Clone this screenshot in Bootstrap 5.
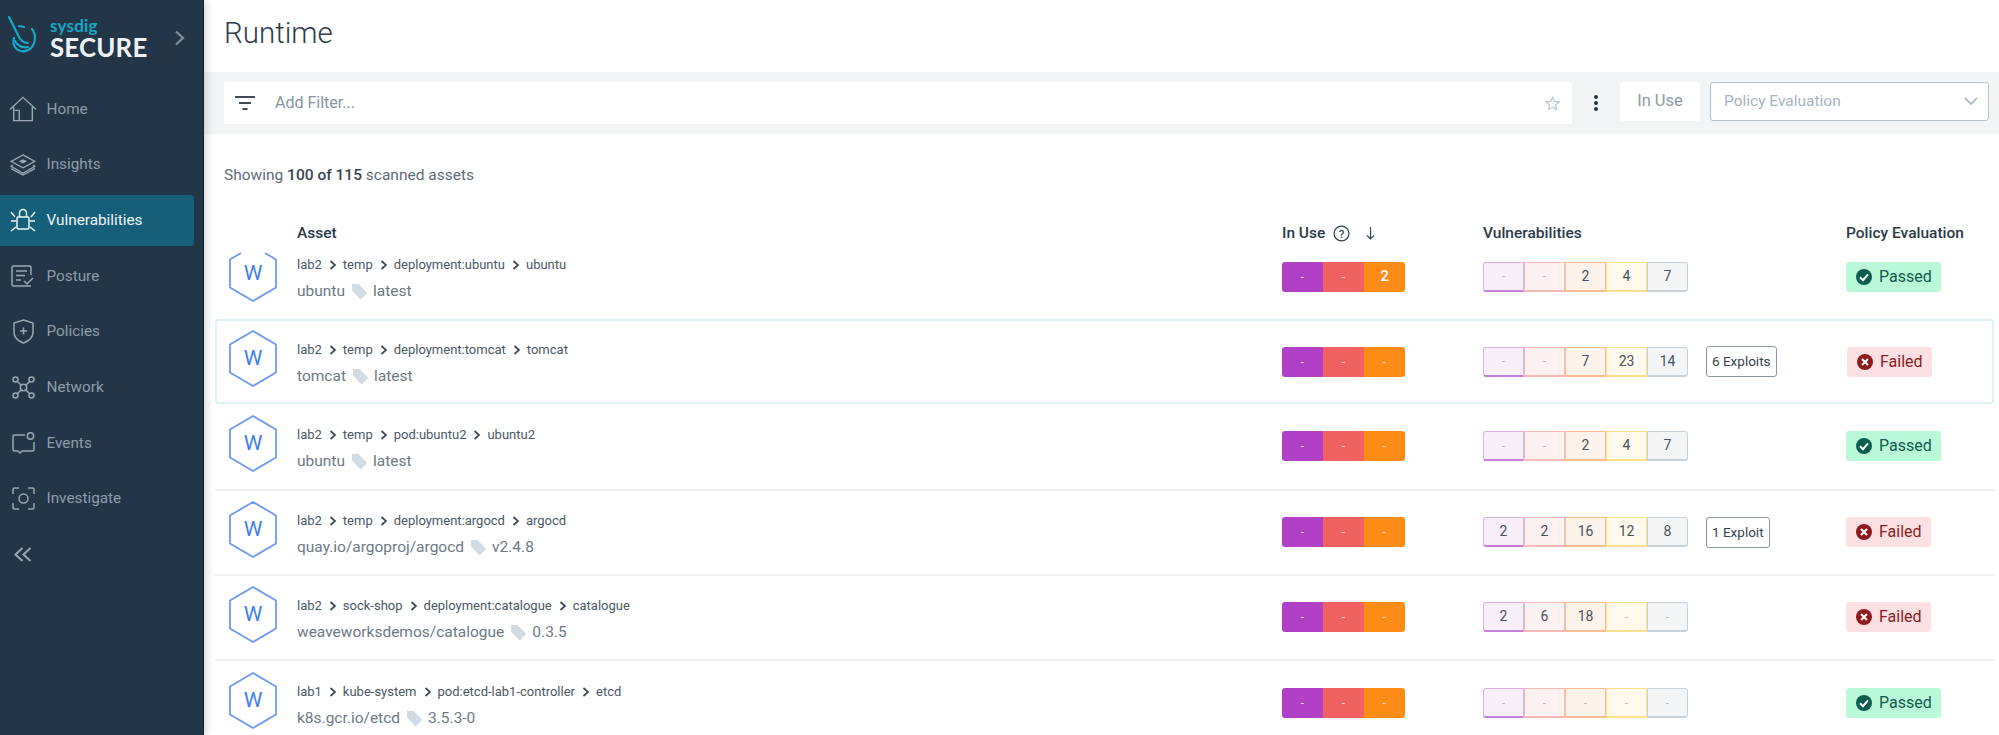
<!DOCTYPE html>
<html lang="en">
<head>
<meta charset="utf-8">
<title>Runtime</title>
<link rel="stylesheet" href="https://cdn.jsdelivr.net/npm/bootstrap@5.3.0/dist/css/bootstrap.min.css">
<style>
html,body{height:735px;overflow:hidden;background:#fff;font-family:Roboto,"Liberation Sans",sans-serif;}
.shell{height:735px;}
.side{width:204px;flex:none;background:#233648;border-right:1px solid #101f2e;box-shadow:3px 0 7px rgba(20,30,40,.16);z-index:2;}
.brand{height:83.500px;padding:15px 0 0 8px;}
.brand-text{margin-left:13px;line-height:1;}
.brand-top{color:#14a9c6;font:700 17px/17px Lato,sans-serif;margin-top:2px;letter-spacing:.2px;}
.brand-main{color:#eef2f5;font:700 25.800px/26px Lato,sans-serif;letter-spacing:.2px;}
.brand-chev{margin-left:27px;margin-top:15px;}
.menu{gap:4.700px;}
.menu-item{height:51px;width:194px;color:#8d9daa;font-size:15.300px;border-radius:0 3px 3px 0;padding:0;}
.menu-item:hover{color:#8d9daa;}
.menu-item.on{background:#156078;color:#f0f5f8;}
.menu-ic{width:46.500px;flex:none;display:flex;justify-content:center;}
.page{min-width:0;}
.head-title{height:72px;padding-left:20px;font-size:29.500px;font-weight:300;color:#2f3c49;line-height:66px;}
.fbar{height:62px;background:#f3f4f6;padding:10px 10px 0 20px;}
.finput{height:42px;width:1348px;background:#fff;border-radius:3px;padding:0 12px 0 11px;color:#8794a0;font-size:16px;}
.kebab{width:48px;height:42px;}
.chip-use{width:80px;height:39px;background:#fff;border-radius:3px;color:#8d99a5;font-size:16.500px;margin-right:10px;}
.sel-pol{width:279px;height:39px;background:#fff;border:1px solid #b7c2cb;border-radius:3px;color:#a7b3bd;font-size:15.500px;padding:0 10px 0 13px;}
.count{height:90px;padding:32px 0 0 20px;color:#5f6b77;font-size:15.500px;line-height:18px;}
.count b{font-weight:500;color:#3a4652;}
.grid-line{display:grid;grid-template-columns:82px 985px 201px 363px 1fr;margin:0 5px 0 11px;}
.thead{height:18px;color:#2b3947;font-size:15.500px;font-weight:500;line-height:18px;}
.trow{height:85px;align-items:center;border-bottom:2px solid #eff1f3;}
.trow.first{height:77px;padding-bottom:8px;border-bottom:0;}
.trow.hot{border:2px solid #dcf2f7;border-radius:4px;grid-template-columns:80px 985px 201px 364px 1fr;}
.trow.tall{height:86.500px;}
.trow.last{border-bottom:0;}
.hexbox{padding-left:14px;margin-bottom:6px;line-height:0;position:relative;}
.hot .hexbox{padding-left:12px;}
.hexw{position:absolute;left:14px;top:0;width:48px;height:57px;line-height:57px;text-align:center;color:#3f7df0;font-size:21px;}
.hot .hexw{left:12px;}
.crumb{color:#4a5763;font-size:13px;line-height:18px;margin-top:3px;}
.crumb svg{margin:0 6px 0 7px;vertical-align:-1px;}
.asset-name{color:#6d7984;font-size:15.500px;line-height:18px;margin-top:8px;}
.asset-name svg{margin:0 6px;vertical-align:-3px;}
.cellbox{width:41px;height:30px;font-size:14px;}
.used{width:123px;height:30px;border-radius:3px;overflow:hidden;color:#fff;}
.u1{background:#b040c6;}.u2{background:#f0625f;}.u3{background:#fd8c17;}
.used .cellbox{color:#f3d7d7;font-size:12px;}
.used .cellbox.lit{color:#fff;font-weight:500;font-size:14.500px;}
.vulns{width:205px;height:30px;}
.vulns .cellbox{border:1.500px solid;border-bottom-width:2px;color:#46535f;}
.vulns .cellbox.nil{color:#b2bac2;font-size:12px;}
.v1{background:#f8eff9;border-color:#dcaee6 #dcaee6 #c67ed8!important;border-radius:3px 0 0 3px;}
.v2{background:#fdf1f1;border-color:#f8b8b5!important;}
.v3{background:#fef3ea;border-color:#fcbd90!important;}
.v4{background:#fffaec;border-color:#fde08d!important;}
.v5{background:#f4f5f7;border-color:#c8d2da!important;border-radius:0 3px 3px 0;}
.exploit{height:31px;padding:0 5px;margin-left:18px;background:#fff;border:1.500px solid #8b98a3;border-radius:3px;color:#35424e;font-size:13.500px;}
.pill{height:30px;padding:0 0 0 10px;border-radius:3px;font-size:16px;gap:7px;}
.pill.ok{background:#b9f9da;color:#115a4d;width:95px;}
.pill.bad{background:#fde0e3;color:#86201f;width:85px;}
</style>
</head>
<body>
<svg width="0" height="0" class="position-absolute">
 <defs>
  <symbol id="hex" viewBox="0 0 48 57"><path d="M24 1 47 14.500V42.500L24 56 1 42.500V14.500Z" fill="none" stroke="#6c9bf2" stroke-width="1.800"/></symbol>
  <symbol id="chev" viewBox="0 0 8 10"><path d="M1.500 1 6 5 1.500 9" fill="none" stroke="#3d4a56" stroke-width="1.700"/></symbol>
  <symbol id="tag" viewBox="0 0 16 16"><path d="M1 1h6.500L15.500 9a1.200 1.200 0 0 1 0 1.700l-5 5a1.200 1.200 0 0 1-1.700 0L1 7.500Z" fill="#d3dbe2"/></symbol>
  <symbol id="okc" viewBox="0 0 16 16"><circle cx="8" cy="8" r="8" fill="#0b5d4e"/><path d="M4 8.300 7 11.200 12 5.300" fill="none" stroke="#fff" stroke-width="2"/></symbol>
  <symbol id="badc" viewBox="0 0 16 16"><circle cx="8" cy="8" r="8" fill="#8f1a1e"/><path d="M5 5l6 6M11 5l-6 6" fill="none" stroke="#fff" stroke-width="2"/></symbol>
 </defs>
</svg>
<div class="shell d-flex">
 <aside class="side d-flex flex-column">
  <div class="brand d-flex align-items-start">
   <svg width="29" height="39" viewBox="0 0 29 39" fill="none" stroke="#14a9c6" stroke-width="2.200" stroke-linecap="round"><path d="M1 2 11 22c2 4 5 6 9 6"/><path d="M11 11l5 1"/><path d="M24 14c4 5 4 14-1 19s-13 4-16-1c-2-3-2-6-1-9"/><path d="M7 26c3 5 8 7 13 6"/></svg>
   <div class="brand-text"><div class="brand-top">sysdig</div><div class="brand-main">SECURE</div></div>
   <svg class="brand-chev" width="11" height="16" viewBox="0 0 11 16"><path d="M2 1.500 9 8 2 14.500" fill="none" stroke="#7f8f9c" stroke-width="2.200"/></svg>
  </div>
  <nav class="nav flex-column menu">
   <a class="nav-link menu-item d-flex align-items-center" href="#"><span class="menu-ic"><svg width="28" height="26" viewBox="0 0 30 27" fill="none" stroke="#98a7b3" stroke-width="1.500"><path d="M1 14 15 1l14 13"/><path d="M5 11v15h20V11"/><path d="M11 26V15h-5"/></svg></span>Home</a>
   <a class="nav-link menu-item d-flex align-items-center" href="#"><span class="menu-ic"><svg width="26" height="22" viewBox="0 0 28 24" fill="none" stroke="#98a7b3" stroke-width="1.500"><path d="M14 1 27 8 14 15 1 8Z"/><path d="M3 12 1 13.500 14 21l13-7.500L25 12"/><path d="M1 16l13 7 13-7"/><path d="M11 8l3-1.500L17 8l-3 1.500Z" fill="#98a7b3"/></svg></span>Insights</a>
   <a class="nav-link menu-item on d-flex align-items-center" href="#"><span class="menu-ic"><svg width="26" height="24" viewBox="0 0 26 24" fill="none" stroke="#f0f5f8" stroke-width="1.500"><rect x="7" y="9" width="12" height="12" rx="1.500"/><path d="M9.500 9V5a3.500 3.500 0 0 1 7 0v4"/><path d="M1 4l4 5M25 4l-4 5M1 13h5M25 13h-5M1 23l5-4M25 23l-5-4"/></svg></span>Vulnerabilities</a>
   <a class="nav-link menu-item d-flex align-items-center" href="#"><span class="menu-ic"><svg width="24" height="22" viewBox="0 0 24 22" fill="none" stroke="#98a7b3" stroke-width="1.500"><path d="M20 10V2.500A1.500 1.500 0 0 0 18.500 1h-16A1.500 1.500 0 0 0 1 2.500v17A1.500 1.500 0 0 0 2.500 21H20"/><path d="M5 6h11M5 10.500h9M5 15h5"/><path d="M13 16l3 3 6-6"/></svg></span>Posture</a>
   <a class="nav-link menu-item d-flex align-items-center" href="#"><span class="menu-ic"><svg width="21" height="25" viewBox="0 0 21 25" fill="none" stroke="#98a7b3" stroke-width="1.500"><path d="M10.500 1 20 4v9c0 6-4 9-9.500 11C5 22 1 19 1 13V4Z"/><path d="M10.500 8.500v7M7 12h7"/></svg></span>Policies</a>
   <a class="nav-link menu-item d-flex align-items-center" href="#"><span class="menu-ic"><svg width="23" height="23" viewBox="0 0 23 23" fill="none" stroke="#98a7b3" stroke-width="1.500"><circle cx="3.500" cy="3.500" r="2.500"/><circle cx="19.500" cy="3.500" r="2.500"/><circle cx="3.500" cy="19.500" r="2.500"/><circle cx="19.500" cy="19.500" r="2.500"/><circle cx="11.500" cy="11.500" r="3.200"/><path d="M5.500 5.500 9 9M17.500 5.500 14 9M5.500 17.500 9 14M17.500 17.500 14 14"/></svg></span>Network</a>
   <a class="nav-link menu-item d-flex align-items-center" href="#"><span class="menu-ic"><svg width="23" height="22" viewBox="0 0 23 22" fill="none" stroke="#98a7b3" stroke-width="1.500"><path d="M13 3H2.500A1.500 1.500 0 0 0 1 4.500v13A1.500 1.500 0 0 0 2.500 19H6l2 2 2-2h10.500a1.500 1.500 0 0 0 1.500-1.500V10"/><circle cx="18.500" cy="4" r="3.200"/></svg></span>Events</a>
   <a class="nav-link menu-item d-flex align-items-center" href="#"><span class="menu-ic"><svg width="23" height="23" viewBox="0 0 23 23" fill="none" stroke="#98a7b3" stroke-width="1.500"><path d="M7 1H2.500A1.500 1.500 0 0 0 1 2.500V7M16 1h4.500A1.500 1.500 0 0 1 22 2.500V7M7 22H2.500A1.500 1.500 0 0 1 1 20.500V16M16 22h4.500a1.500 1.500 0 0 0 1.500-1.500V16"/><circle cx="11.500" cy="11.500" r="4.500"/></svg></span>Investigate</a>
   <a class="nav-link menu-item d-flex align-items-center" href="#" aria-label="Collapse"><span class="menu-ic"><svg width="18" height="15" viewBox="0 0 18 15" fill="none" stroke="#98a7b3" stroke-width="2"><path d="M8.500 1 1.500 7.500l7 6.500M16.500 1l-7 6.500 7 6.500"/></svg></span></a>
  </nav>
 </aside>

 <main class="page flex-grow-1">
  <div class="head-title">Runtime</div>
  <div class="fbar d-flex align-items-start">
   <div class="finput d-flex align-items-center">
    <svg width="20" height="14" viewBox="0 0 20 14" fill="#3e4b57"><rect width="20" height="2"/><rect x="4" y="6" width="12" height="2"/><rect x="7.500" y="12" width="5" height="2"/></svg>
    <span class="ms-3 ps-1 flex-grow-1">Add Filter...</span>
    <svg width="15" height="15" viewBox="0 0 15 15"><path d="M7.500 1.200 9.400 5.400l4.500.5-3.400 3 1 4.500-4-2.300-4 2.300 1-4.500-3.400-3 4.500-.5Z" fill="none" stroke="#b5c0c9" stroke-width="1.100"/></svg>
   </div>
   <div class="kebab d-flex justify-content-center align-items-center"><svg width="4" height="16" viewBox="0 0 4 16" fill="#28353f"><circle cx="2" cy="2" r="2"/><circle cx="2" cy="8" r="2"/><circle cx="2" cy="14" r="2"/></svg></div>
   <div class="chip-use d-flex align-items-center justify-content-center">In Use</div>
   <div class="sel-pol d-flex align-items-center justify-content-between"><span>Policy Evaluation</span><svg width="14" height="9" viewBox="0 0 14 9"><path d="M1 1l6 6 6-6" fill="none" stroke="#a7b3bd" stroke-width="1.700"/></svg></div>
  </div>
  <div class="count">Showing <b>100 of 115</b> scanned assets</div>

  <div class="grid-line thead">
   <div></div><div>Asset</div>
   <div class="d-flex align-items-center">In Use
    <svg class="ms-2" width="17" height="17" viewBox="0 0 16 16"><circle cx="8" cy="8" r="7" fill="none" stroke="#3a4753" stroke-width="1.200"/><text x="8" y="12" text-anchor="middle" font-size="11" fill="#3a4753">?</text></svg>
    <svg class="ms-3" width="9" height="13" viewBox="0 0 9 13"><path d="M4.500 0v12M1 8.500l3.500 3.500L8 8.500" fill="none" stroke="#3a4753" stroke-width="1.200"/></svg>
   </div>
   <div>Vulnerabilities</div><div>Policy Evaluation</div>
  </div>

  <div class="grid-line trow first">
   <div class="hexbox"><svg width="48" height="57" viewBox="0 0 48 57"><path d="M12 8 1 14.500V42.500L24 56 47 42.500V14.500L36 8" fill="none" stroke="#6c9bf2" stroke-width="1.800"/></svg><span class="hexw">W</span></div>
   <div><div class="crumb">lab2<svg width="8" height="10"><use href="#chev"/></svg>temp<svg width="8" height="10"><use href="#chev"/></svg>deployment:ubuntu<svg width="8" height="10"><use href="#chev"/></svg>ubuntu</div><div class="asset-name">ubuntu<svg width="16" height="16"><use href="#tag"/></svg>latest</div></div>
   <div class="used d-flex"><div class="cellbox u1 d-flex align-items-center justify-content-center">-</div><div class="cellbox u2 d-flex align-items-center justify-content-center">-</div><div class="cellbox u3 lit d-flex align-items-center justify-content-center">2</div></div>
   <div class="d-flex align-items-center"><div class="vulns d-flex"><div class="cellbox nil v1 d-flex align-items-center justify-content-center">-</div><div class="cellbox nil v2 d-flex align-items-center justify-content-center">-</div><div class="cellbox v3 d-flex align-items-center justify-content-center">2</div><div class="cellbox v4 d-flex align-items-center justify-content-center">4</div><div class="cellbox v5 d-flex align-items-center justify-content-center">7</div></div></div>
   <div class="pill ok d-flex align-items-center"><svg width="16" height="16"><use href="#okc"/></svg>Passed</div>
  </div>

  <div class="grid-line trow hot">
   <div class="hexbox"><svg width="48" height="57"><use href="#hex"/></svg><span class="hexw">W</span></div>
   <div><div class="crumb">lab2<svg width="8" height="10"><use href="#chev"/></svg>temp<svg width="8" height="10"><use href="#chev"/></svg>deployment:tomcat<svg width="8" height="10"><use href="#chev"/></svg>tomcat</div><div class="asset-name">tomcat<svg width="16" height="16"><use href="#tag"/></svg>latest</div></div>
   <div class="used d-flex"><div class="cellbox u1 d-flex align-items-center justify-content-center">-</div><div class="cellbox u2 d-flex align-items-center justify-content-center">-</div><div class="cellbox u3 d-flex align-items-center justify-content-center">-</div></div>
   <div class="d-flex align-items-center"><div class="vulns d-flex"><div class="cellbox nil v1 d-flex align-items-center justify-content-center">-</div><div class="cellbox nil v2 d-flex align-items-center justify-content-center">-</div><div class="cellbox v3 d-flex align-items-center justify-content-center">7</div><div class="cellbox v4 d-flex align-items-center justify-content-center">23</div><div class="cellbox v5 d-flex align-items-center justify-content-center">14</div></div><div class="exploit d-flex align-items-center">6 Exploits</div></div>
   <div class="pill bad d-flex align-items-center"><svg width="16" height="16"><use href="#badc"/></svg>Failed</div>
  </div>

  <div class="grid-line trow tall">
   <div class="hexbox"><svg width="48" height="57"><use href="#hex"/></svg><span class="hexw">W</span></div>
   <div><div class="crumb">lab2<svg width="8" height="10"><use href="#chev"/></svg>temp<svg width="8" height="10"><use href="#chev"/></svg>pod:ubuntu2<svg width="8" height="10"><use href="#chev"/></svg>ubuntu2</div><div class="asset-name">ubuntu<svg width="16" height="16"><use href="#tag"/></svg>latest</div></div>
   <div class="used d-flex"><div class="cellbox u1 d-flex align-items-center justify-content-center">-</div><div class="cellbox u2 d-flex align-items-center justify-content-center">-</div><div class="cellbox u3 d-flex align-items-center justify-content-center">-</div></div>
   <div class="d-flex align-items-center"><div class="vulns d-flex"><div class="cellbox nil v1 d-flex align-items-center justify-content-center">-</div><div class="cellbox nil v2 d-flex align-items-center justify-content-center">-</div><div class="cellbox v3 d-flex align-items-center justify-content-center">2</div><div class="cellbox v4 d-flex align-items-center justify-content-center">4</div><div class="cellbox v5 d-flex align-items-center justify-content-center">7</div></div></div>
   <div class="pill ok d-flex align-items-center"><svg width="16" height="16"><use href="#okc"/></svg>Passed</div>
  </div>

  <div class="grid-line trow">
   <div class="hexbox"><svg width="48" height="57"><use href="#hex"/></svg><span class="hexw">W</span></div>
   <div><div class="crumb">lab2<svg width="8" height="10"><use href="#chev"/></svg>temp<svg width="8" height="10"><use href="#chev"/></svg>deployment:argocd<svg width="8" height="10"><use href="#chev"/></svg>argocd</div><div class="asset-name">quay.io/argoproj/argocd<svg width="16" height="16"><use href="#tag"/></svg>v2.4.8</div></div>
   <div class="used d-flex"><div class="cellbox u1 d-flex align-items-center justify-content-center">-</div><div class="cellbox u2 d-flex align-items-center justify-content-center">-</div><div class="cellbox u3 d-flex align-items-center justify-content-center">-</div></div>
   <div class="d-flex align-items-center"><div class="vulns d-flex"><div class="cellbox v1 d-flex align-items-center justify-content-center">2</div><div class="cellbox v2 d-flex align-items-center justify-content-center">2</div><div class="cellbox v3 d-flex align-items-center justify-content-center">16</div><div class="cellbox v4 d-flex align-items-center justify-content-center">12</div><div class="cellbox v5 d-flex align-items-center justify-content-center">8</div></div><div class="exploit d-flex align-items-center">1 Exploit</div></div>
   <div class="pill bad d-flex align-items-center"><svg width="16" height="16"><use href="#badc"/></svg>Failed</div>
  </div>

  <div class="grid-line trow">
   <div class="hexbox"><svg width="48" height="57"><use href="#hex"/></svg><span class="hexw">W</span></div>
   <div><div class="crumb">lab2<svg width="8" height="10"><use href="#chev"/></svg>sock-shop<svg width="8" height="10"><use href="#chev"/></svg>deployment:catalogue<svg width="8" height="10"><use href="#chev"/></svg>catalogue</div><div class="asset-name">weaveworksdemos/catalogue<svg width="16" height="16"><use href="#tag"/></svg>0.3.5</div></div>
   <div class="used d-flex"><div class="cellbox u1 d-flex align-items-center justify-content-center">-</div><div class="cellbox u2 d-flex align-items-center justify-content-center">-</div><div class="cellbox u3 d-flex align-items-center justify-content-center">-</div></div>
   <div class="d-flex align-items-center"><div class="vulns d-flex"><div class="cellbox v1 d-flex align-items-center justify-content-center">2</div><div class="cellbox v2 d-flex align-items-center justify-content-center">6</div><div class="cellbox v3 d-flex align-items-center justify-content-center">18</div><div class="cellbox nil v4 d-flex align-items-center justify-content-center">-</div><div class="cellbox nil v5 d-flex align-items-center justify-content-center">-</div></div></div>
   <div class="pill bad d-flex align-items-center"><svg width="16" height="16"><use href="#badc"/></svg>Failed</div>
  </div>

  <div class="grid-line trow last">
   <div class="hexbox"><svg width="48" height="57"><use href="#hex"/></svg><span class="hexw">W</span></div>
   <div><div class="crumb">lab1<svg width="8" height="10"><use href="#chev"/></svg>kube-system<svg width="8" height="10"><use href="#chev"/></svg>pod:etcd-lab1-controller<svg width="8" height="10"><use href="#chev"/></svg>etcd</div><div class="asset-name">k8s.gcr.io/etcd<svg width="16" height="16"><use href="#tag"/></svg>3.5.3-0</div></div>
   <div class="used d-flex"><div class="cellbox u1 d-flex align-items-center justify-content-center">-</div><div class="cellbox u2 d-flex align-items-center justify-content-center">-</div><div class="cellbox u3 d-flex align-items-center justify-content-center">-</div></div>
   <div class="d-flex align-items-center"><div class="vulns d-flex"><div class="cellbox nil v1 d-flex align-items-center justify-content-center">-</div><div class="cellbox nil v2 d-flex align-items-center justify-content-center">-</div><div class="cellbox nil v3 d-flex align-items-center justify-content-center">-</div><div class="cellbox nil v4 d-flex align-items-center justify-content-center">-</div><div class="cellbox nil v5 d-flex align-items-center justify-content-center">-</div></div></div>
   <div class="pill ok d-flex align-items-center"><svg width="16" height="16"><use href="#okc"/></svg>Passed</div>
  </div>
 </main>
</div>
<script src="https://cdn.jsdelivr.net/npm/bootstrap@5.3.0/dist/js/bootstrap.bundle.min.js"></script>
</body>
</html>
